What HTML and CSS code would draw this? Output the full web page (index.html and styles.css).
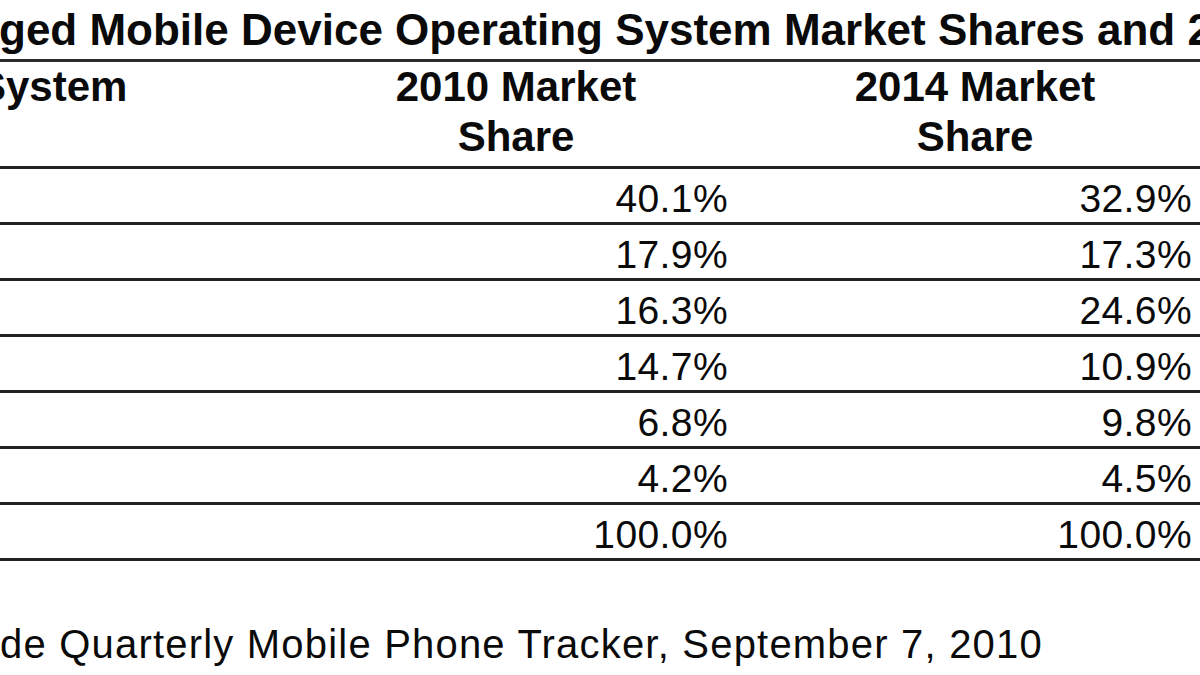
FILE: index.html
```html
<!DOCTYPE html>
<html lang="en">
<head>
<meta charset="utf-8">
<title>Converged Mobile Device Operating System Market Shares</title>
<link rel="stylesheet" href="styles.css">
</head>
<body>
<div class="page">
  <div class="title"><span class="title-text">ged Mobile Device Operating System Market Shares and 2014 Forecast</span></div>
  <div class="row head">
    <div class="cell label"><span class="cut">System</span></div>
    <div class="cell hcol">2010 Market<br>Share</div>
    <div class="cell hcol hcol-last">2014 Market<br>Share</div>
  </div>
  <div class="row"><div class="cell label"></div><div class="cell num">40.1%</div><div class="cell num">32.9%</div></div>
  <div class="row"><div class="cell label"></div><div class="cell num">17.9%</div><div class="cell num">17.3%</div></div>
  <div class="row"><div class="cell label"></div><div class="cell num">16.3%</div><div class="cell num">24.6%</div></div>
  <div class="row"><div class="cell label"></div><div class="cell num">14.7%</div><div class="cell num">10.9%</div></div>
  <div class="row"><div class="cell label"></div><div class="cell num">6.8%</div><div class="cell num">9.8%</div></div>
  <div class="row"><div class="cell label"></div><div class="cell num">4.2%</div><div class="cell num">4.5%</div></div>
  <div class="row"><div class="cell label"></div><div class="cell num">100.0%</div><div class="cell num">100.0%</div></div>
  <div class="source">de Quarterly Mobile Phone Tracker, September 7, 2010</div>
</div>
</body>
</html>
```
FILE: styles.css
```css
html, body {
  margin: 0;
  padding: 0;
  background: #ffffff;
}
body {
  width: 1200px;
  height: 675px;
  overflow: hidden;
}
.page {
  width: 1200px;
  font-family: "Liberation Sans", Arial, sans-serif;
  color: #0a0a0a;
}
.title {
  padding-top: 5px;
  padding-bottom: 4px;
  border-bottom: 3px solid #2b2b2b;
  white-space: nowrap;
  font-size: 44px;
  font-weight: bold;
  line-height: 50px;
}
.title-text {
  display: inline-block;
  margin-left: -1px;
}
.row {
  display: grid;
  grid-template-columns: 296px 440px 464px;
  border-bottom: 3px solid #222222;
}
.head {
  padding-bottom: 4px;
  font-size: 42px;
  font-weight: bold;
  line-height: 50px;
}
.cut {
  display: inline-block;
  margin-left: -22px;
}
.hcol {
  text-align: center;
}
.hcol-last {
  padding-left: 14px;
}
.num {
  padding-top: 6px;
  padding-right: 8px;
  font-size: 39px;
  line-height: 47px;
  letter-spacing: 0.4px;
  text-align: right;
}
.source {
  margin-top: 60px;
  font-size: 40px;
  line-height: 47px;
  letter-spacing: 1.2px;
  white-space: nowrap;
}
```
